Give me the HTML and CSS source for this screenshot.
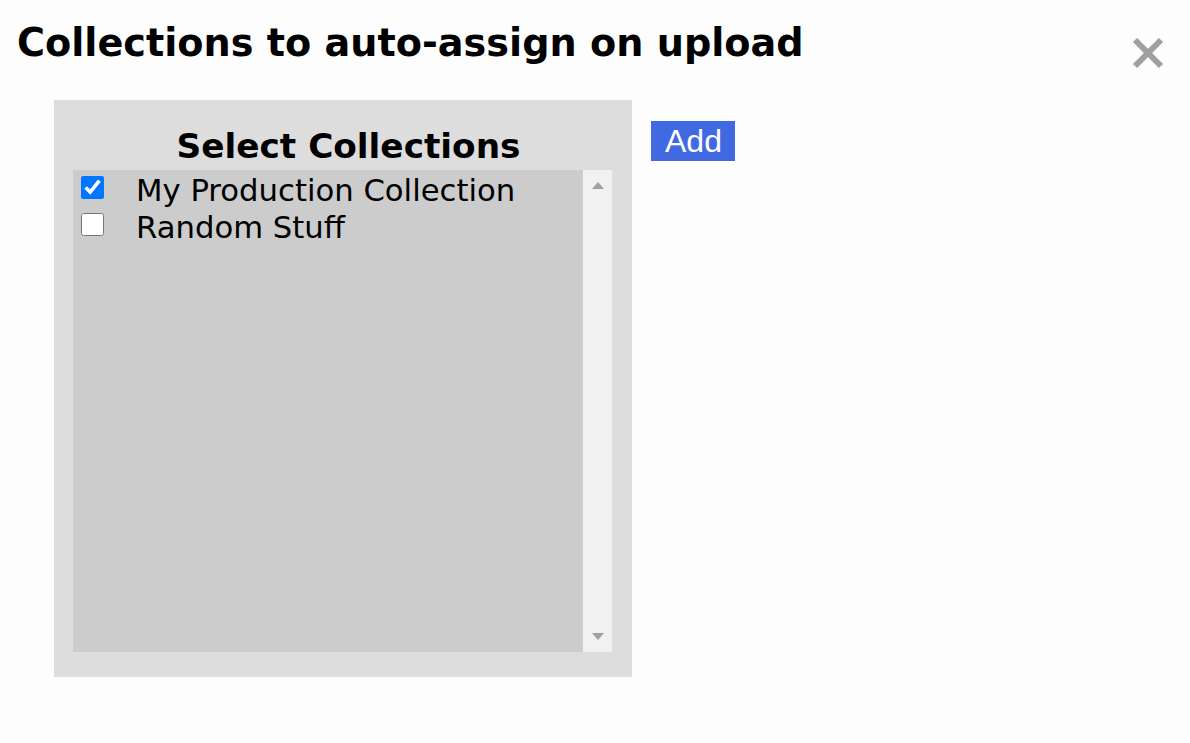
FILE: index.html
```html
<!DOCTYPE html>
<html>
<head>
<meta charset="utf-8">
<link rel="stylesheet" href="styles.css">
</head>
<body>
<div class="dialog">
  <header class="dialog-head">
    <h1 class="title">Collections to auto-assign on upload</h1>
    <button class="close" aria-label="Close">
      <svg width="34" height="34" viewBox="0 0 34 34"><path d="M4 4 L30 30 M30 4 L4 30" stroke="#a0a0a0" stroke-width="6" stroke-linecap="butt"/></svg>
    </button>
  </header>
  <div class="dialog-body">
    <section class="picker">
      <h2 class="picker-title">Select Collections</h2>
      <div class="listbox">
        <ul class="options">
          <li class="option"><input type="checkbox" checked><span>My Production Collection</span></li>
          <li class="option"><input type="checkbox"><span>Random Stuff</span></li>
        </ul>
        <div class="scrollbar">
          <span class="arrow up"></span>
          <span class="arrow down"></span>
        </div>
      </div>
    </section>
    <button class="add">Add</button>
  </div>
</div>
</body>
</html>
```
FILE: styles.css
```css
html, body {
  margin: 0;
  padding: 0;
  background: #fdfdfd;
}
body {
  font-family: "DejaVu Sans", Verdana, sans-serif;
  color: #000;
}
.dialog {
  padding: 20px 0 0 17px;
}
.dialog-head {
  display: flex;
  justify-content: space-between;
  align-items: flex-start;
}
.title {
  margin: 0;
  font-size: 38.2px;
  line-height: 46px;
  font-weight: bold;
}
.close {
  border: 0;
  background: none;
  padding: 0;
  margin: 16px 25px -4px 0;
  width: 34px;
  height: 34px;
  display: block;
}
.close svg { display: block; }
.dialog-body {
  display: flex;
  align-items: flex-start;
  gap: 19px;
  margin: 34px 0 0 37px;
}
.picker {
  width: 578px;
  height: 577px;
  background: #dddddd;
  box-sizing: border-box;
  padding: 26px 20px 25px 19px;
  display: flex;
  flex-direction: column;
}
.picker-title {
  margin: 0 0 3px 0;
  padding-left: 12px;
  text-align: center;
  font-size: 34.3px;
  line-height: 41px;
  font-weight: bold;
}
.listbox {
  flex: 1;
  display: flex;
  background: #cccccc;
}
.options {
  list-style: none;
  margin: 0;
  padding: 0;
  flex: 1;
}
.option {
  height: 37px;
  display: flex;
  align-items: flex-start;
  padding-left: 8px;
  font-size: 30.7px;
}
.option input {
  width: 23px;
  height: 23px;
  margin: 6px 32px 0 0;
  flex: none;
}
.option span {
  line-height: 37px;
  position: relative;
  top: 2px;
}
.scrollbar {
  width: 29px;
  background: #f1f1f1;
  display: flex;
  flex-direction: column;
  justify-content: space-between;
  align-items: center;
  padding: 12px 0 12px;
  box-sizing: border-box;
}
.arrow {
  width: 0;
  height: 0;
  border-left: 6.5px solid transparent;
  border-right: 6.5px solid transparent;
}
.arrow.up { border-bottom: 7px solid #a0a0a0; }
.arrow.down { border-top: 7px solid #a0a0a0; }
.add {
  margin-top: 21px;
  background: #4169e1;
  color: #fff;
  border: 0;
  font-family: "Liberation Sans", Arial, sans-serif;
  font-size: 32px;
  line-height: 40px;
  height: 40px;
  padding: 0 13px 0 14px;
}
```
